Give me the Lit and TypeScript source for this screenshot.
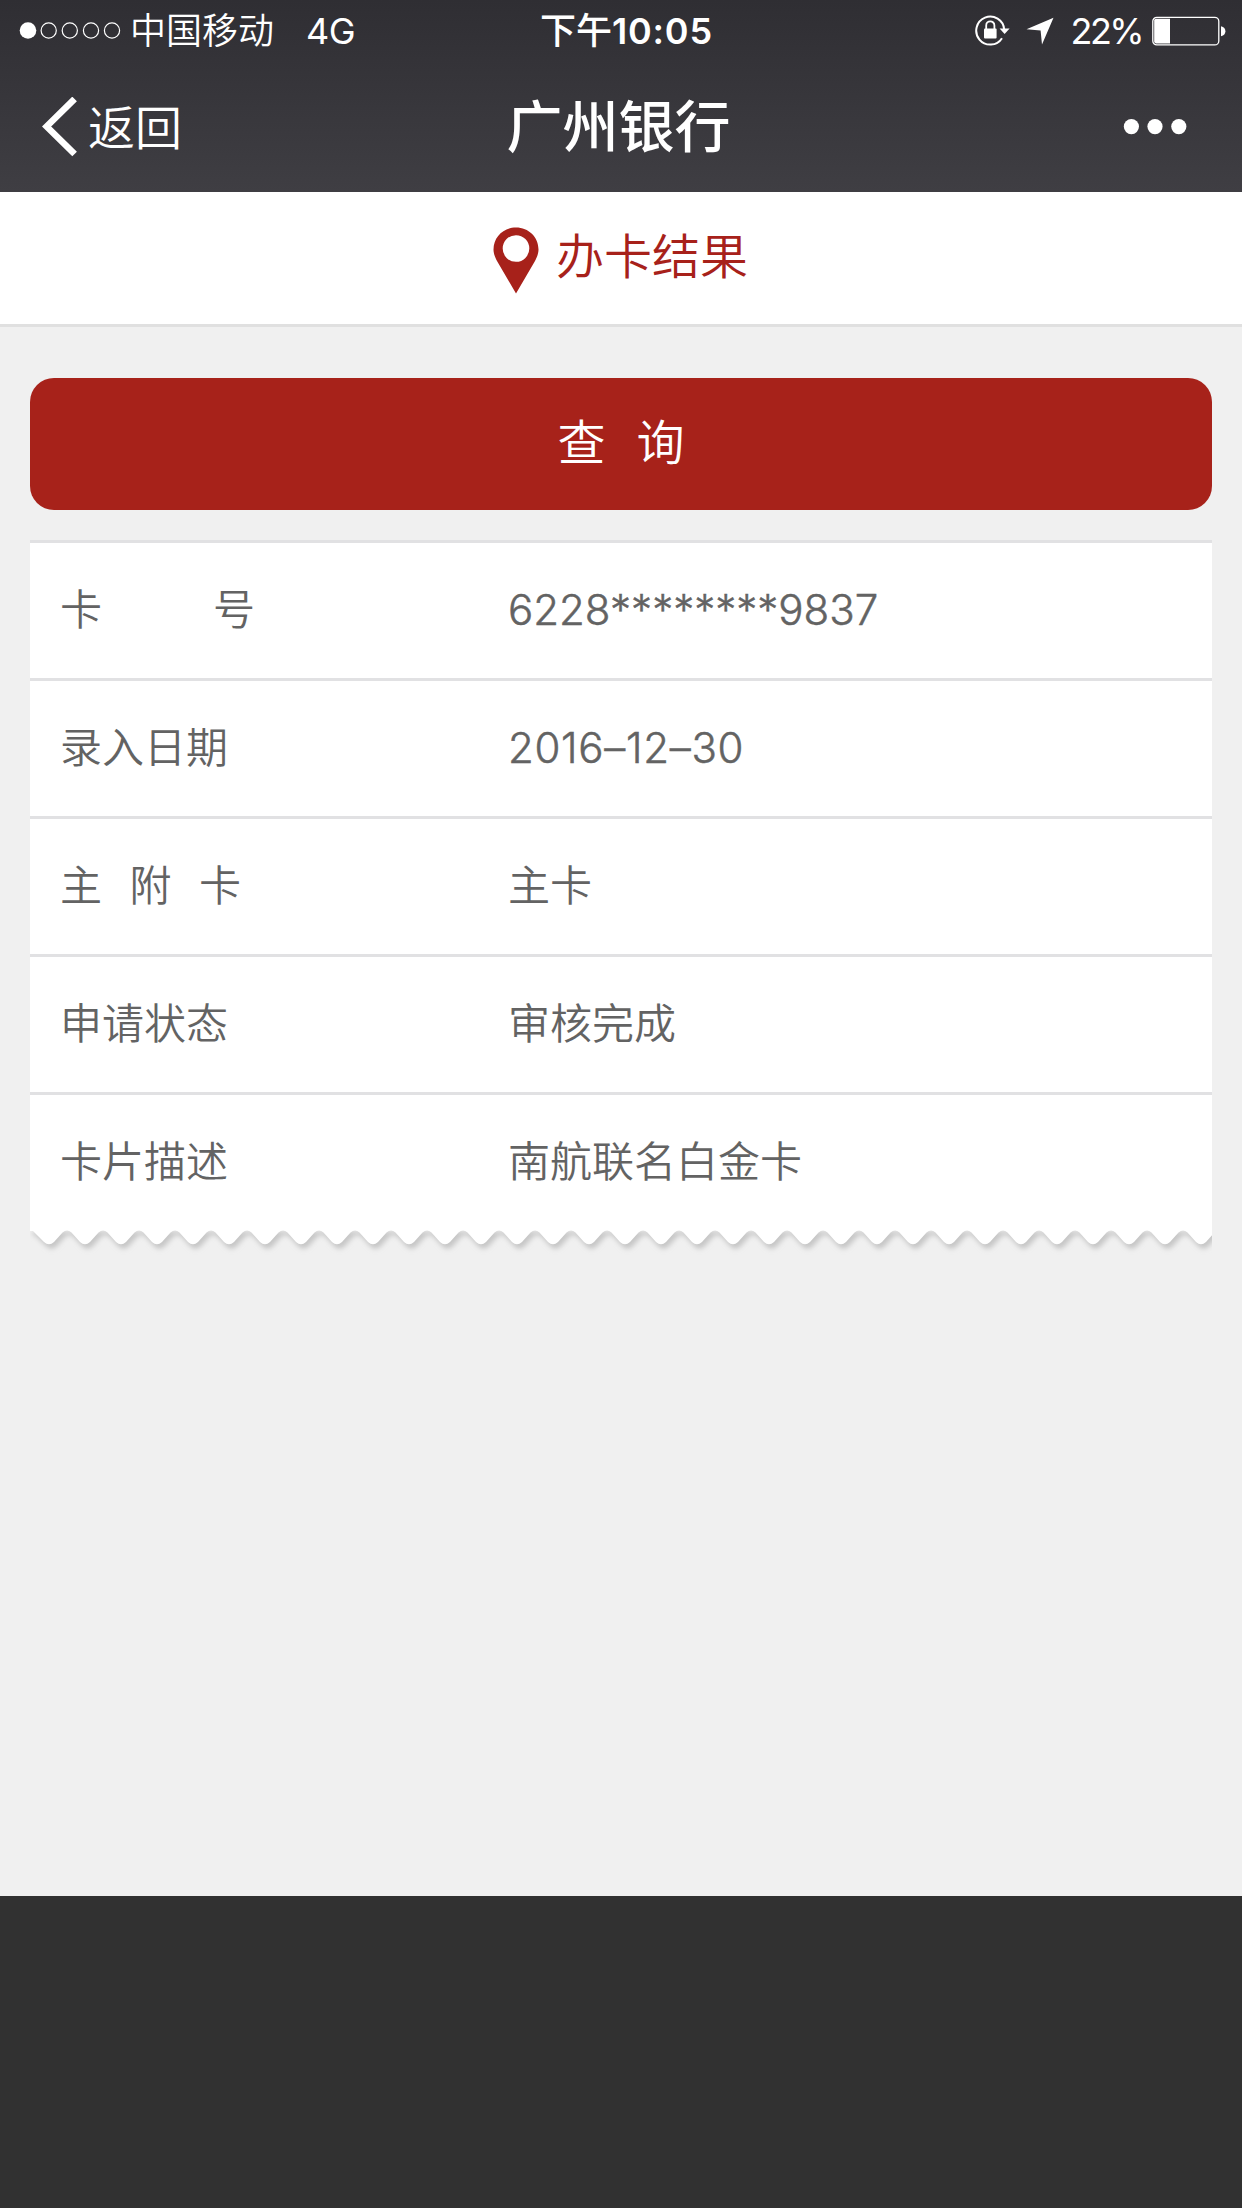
import { LitElement, html, css, svg } from "lit";
import { customElement, property } from "lit/decorators.js";

interface Row {
  label: string[];
  gap: "none" | "wide" | "mid";
  value: string;
  kind: "card" | "date" | "text";
}

const ROWS: Row[] = [
  { label: ["卡", "号"], gap: "wide", value: "6228********9837", kind: "card" },
  { label: ["录入日期"], gap: "none", value: "2016–12–30", kind: "date" },
  { label: ["主", "附", "卡"], gap: "mid", value: "主卡", kind: "text" },
  { label: ["申请状态"], gap: "none", value: "审核完成", kind: "text" },
  { label: ["卡片描述"], gap: "none", value: "南航联名白金卡", kind: "text" },
];

@customElement("status-bar")
export class StatusBar extends LitElement {
  static styles = css`
    :host { display: block; }
    .bar { display: grid; grid-template-columns: 540px 1fr auto; height: 62px; color: #fff; font-size: 36px; line-height: 62px; white-space: pre; }
    .left { display: flex; align-items: center; padding-left: 19px; font-weight: 350; }
    .signal { width: 103px; height: 18px; margin-right: 8px; }
    .net { margin-left: 32px; letter-spacing: -0.4px; font-weight: 400; }
    .time { font-weight: 500; }
    .digits { font-weight: 600; letter-spacing: 0.8px; }
    .right { display: flex; align-items: center; padding-right: 16px; }
    .lock { width: 36px; height: 34px; margin-bottom: 1px; }
    .arrow { width: 28px; height: 28px; margin-left: 15px; }
    .pct { margin-left: 17px; letter-spacing: -2.6px; font-weight: 400; }
    .battery { width: 74px; height: 30px; margin: 0 0 1px 10px; }
    svg { display: block; flex: none; }
  `;
  render() {
    return html`
      <div class="bar">
        <div class="left">
          <svg class="signal" viewBox="0 0 103 18">
            <circle cx="9" cy="8.5" r="8.3" fill="#fff"></circle>
            ${[29.7, 50.8, 72, 93].map(
              (x) => svg`<circle cx=${x} cy="8.5" r="7.6" fill="none" stroke="#fff" stroke-width="1.2"></circle>`
            )}
          </svg>
          <span>中国移动</span><span class="net">4G</span>
        </div>
        <div class="time">下午<span class="digits">10:05</span></div>
        <div class="right">
          <svg class="lock" viewBox="0 0 36 34">
            <path d="M29.2 15.5A14 14 0 1 0 27 24.2" fill="none" stroke="#fff" stroke-width="2"></path>
            <path d="M24.6 14.6H34.6L29.6 20Z" fill="#fff"></path>
            <rect x="9" y="14.6" width="12.6" height="9.8" rx="1" fill="#fff"></rect>
            <path d="M11.2 15.5V11.4a4.1 4.1 0 0 1 8.2 0V15.5" fill="none" stroke="#fff" stroke-width="1.8"></path>
          </svg>
          <svg class="arrow" viewBox="0 0 28 28"><path d="M27.5 0.8L16 27.5L14.6 13.4L0.5 12.3Z" fill="#fff"></path></svg>
          <span class="pct">22%</span>
          <svg class="battery" viewBox="0 0 74 30">
            <rect x="0.8" y="1.3" width="66" height="27.6" rx="4" fill="none" stroke="#fff" stroke-width="1.3"></rect>
            <path d="M4 2.8H18V27.4H4Q2.2 27.4 2.2 25.6V4.6Q2.2 2.8 4 2.8Z" fill="#fff"></path>
            <path d="M69 10.2Q73.4 11.2 73.4 15.2T69 20.2Z" fill="#fff"></path>
          </svg>
        </div>
      </div>
    `;
  }
}

@customElement("nav-bar")
export class NavBar extends LitElement {
  static styles = css`
    :host { display: block; }
    .nav { display: grid; grid-template-columns: 1fr auto 1fr; align-items: center; height: 130px; color: #fff; }
    .back { display: flex; align-items: center; padding-left: 42px; font-size: 47px; line-height: 60px; font-weight: 350; }
    .chevron { width: 36px; height: 60px; margin-right: 10px; }
    .back span { padding-top: 2px; }
    .title { padding: 0 5px 0 0; font-size: 56px; line-height: 70px; font-weight: 500; }
    .more { justify-self: end; width: 64px; height: 16px; margin-right: 55px; }
    svg { display: block; flex: none; }
  `;
  render() {
    return html`
      <div class="nav">
        <div class="back">
          <svg class="chevron" viewBox="0 0 36 60"><path d="M32.6 2L4.6 29.5L32.6 57" fill="none" stroke="#fff" stroke-width="6.6"></path></svg>
          <span>返回</span>
        </div>
        <div class="title">广州银行</div>
        <svg class="more" viewBox="0 0 64 16">
          ${[8.4, 32, 55.8].map((x) => svg`<circle cx=${x} cy="7.6" r="7.6" fill="#fff"></circle>`)}
        </svg>
      </div>
    `;
  }
}

@customElement("result-list")
export class ResultList extends LitElement {
  @property({ attribute: false }) rows: Row[] = [];
  static styles = css`
    :host { display: block; }
    .row { display: flex; box-sizing: border-box; height: 138px; padding-left: 30px; border-top: 3px solid #e1e1e3; background: #fff; color: #636363; font-size: 42px; line-height: 134px; font-weight: 350; }
    .row.last { height: 135px; }
    .label { display: flex; width: 448px; }
    .wide { gap: 111px; }
    .mid { gap: 27.5px; }
    .card { -webkit-text-stroke: 0.5px #636363; }
    .date { -webkit-text-stroke: 0.5px #636363; letter-spacing: 0.7px; }
    .edge { display: block; width: 1182px; height: 30px; }
  `;
  private edgePath() {
    let d = "M0 0V4L3 4";
    for (let x = 1; x < 1182; x += 36) {
      d += `L${x + 13} 15Q${x + 18} 19.5 ${x + 23} 15L${x + 31.5} 5.5Q${x + 36} 1.5 ${x + 40.5} 5.5`;
    }
    return d + "V0Z";
  }
  render() {
    return html`
      ${this.rows.map(
        (r, i) => html`
          <div class="row ${i === this.rows.length - 1 ? "last" : ""}">
            <div class="label ${r.gap}">${r.label.map((t) => html`<span>${t}</span>`)}</div>
            <div class=${r.kind}>${r.value}</div>
          </div>
        `
      )}
      <svg class="edge" viewBox="0 0 1182 30">
        <defs>
          <filter id="soft" x="-1%" y="-50%" width="102%" height="200%"><feGaussianBlur stdDeviation="2.4"></feGaussianBlur></filter>
        </defs>
        <path d=${this.edgePath()} transform="translate(2.5 4.5)" fill="#c6c6c6" filter="url(#soft)"></path>
        <path d=${this.edgePath()} fill="#fff"></path>
      </svg>
    `;
  }
}

@customElement("app-root")
export class AppRoot extends LitElement {
  static styles = css`
    :host { display: block; font-family: Inter, "Noto Sans CJK SC", sans-serif; }
    .screen { display: flex; flex-direction: column; height: 2208px; overflow: hidden; background: #313131; }
    .top { height: 192px; background: linear-gradient(#2f2e33, #3f3e43); }
    .page { height: 1704px; background: #f0f0f0; }
    .heading { display: flex; justify-content: center; align-items: center; box-sizing: border-box; height: 135px; padding: 0 1px 3px 0; border-bottom: 3px solid #e0e0e0; background: #fff; color: #a7211a; font-size: 48px; line-height: 60px; font-weight: 350; }
    .pin { width: 46px; height: 67px; margin: 8px 17px 0 0; }
    .content { padding: 51px 30px 0; }
    .query { display: flex; justify-content: center; gap: 31px; width: 100%; height: 132px; padding: 0 0 3px; border: 0; border-radius: 24px; background: #a7221a; color: #fff; font-family: inherit; font-size: 48px; line-height: 129px; font-weight: 350; margin-bottom: 30px; }
  `;
  render() {
    return html`
      <div class="screen">
        <div class="top">
          <status-bar></status-bar>
          <nav-bar></nav-bar>
        </div>
        <div class="page">
          <div class="heading">
            <svg class="pin" viewBox="0 0 46 67">
              <path fill-rule="evenodd" fill="#a7211a" d="M23 0.5C10.5 0.5 0.5 10 0.5 22.5C0.5 27 2.5 31 4 34L23 66.5L42 34C43.5 31 45.5 27 45.5 22.5C45.5 10 35.5 0.5 23 0.5ZM23 8.2A13.3 13.3 0 1 1 23 34.8A13.3 13.3 0 1 1 23 8.2Z"></path>
            </svg>
            <span>办卡结果</span>
          </div>
          <div class="content">
            <button class="query"><span>查</span><span>询</span></button>
            <result-list .rows=${ROWS}></result-list>
          </div>
        </div>
      </div>
    `;
  }
}
